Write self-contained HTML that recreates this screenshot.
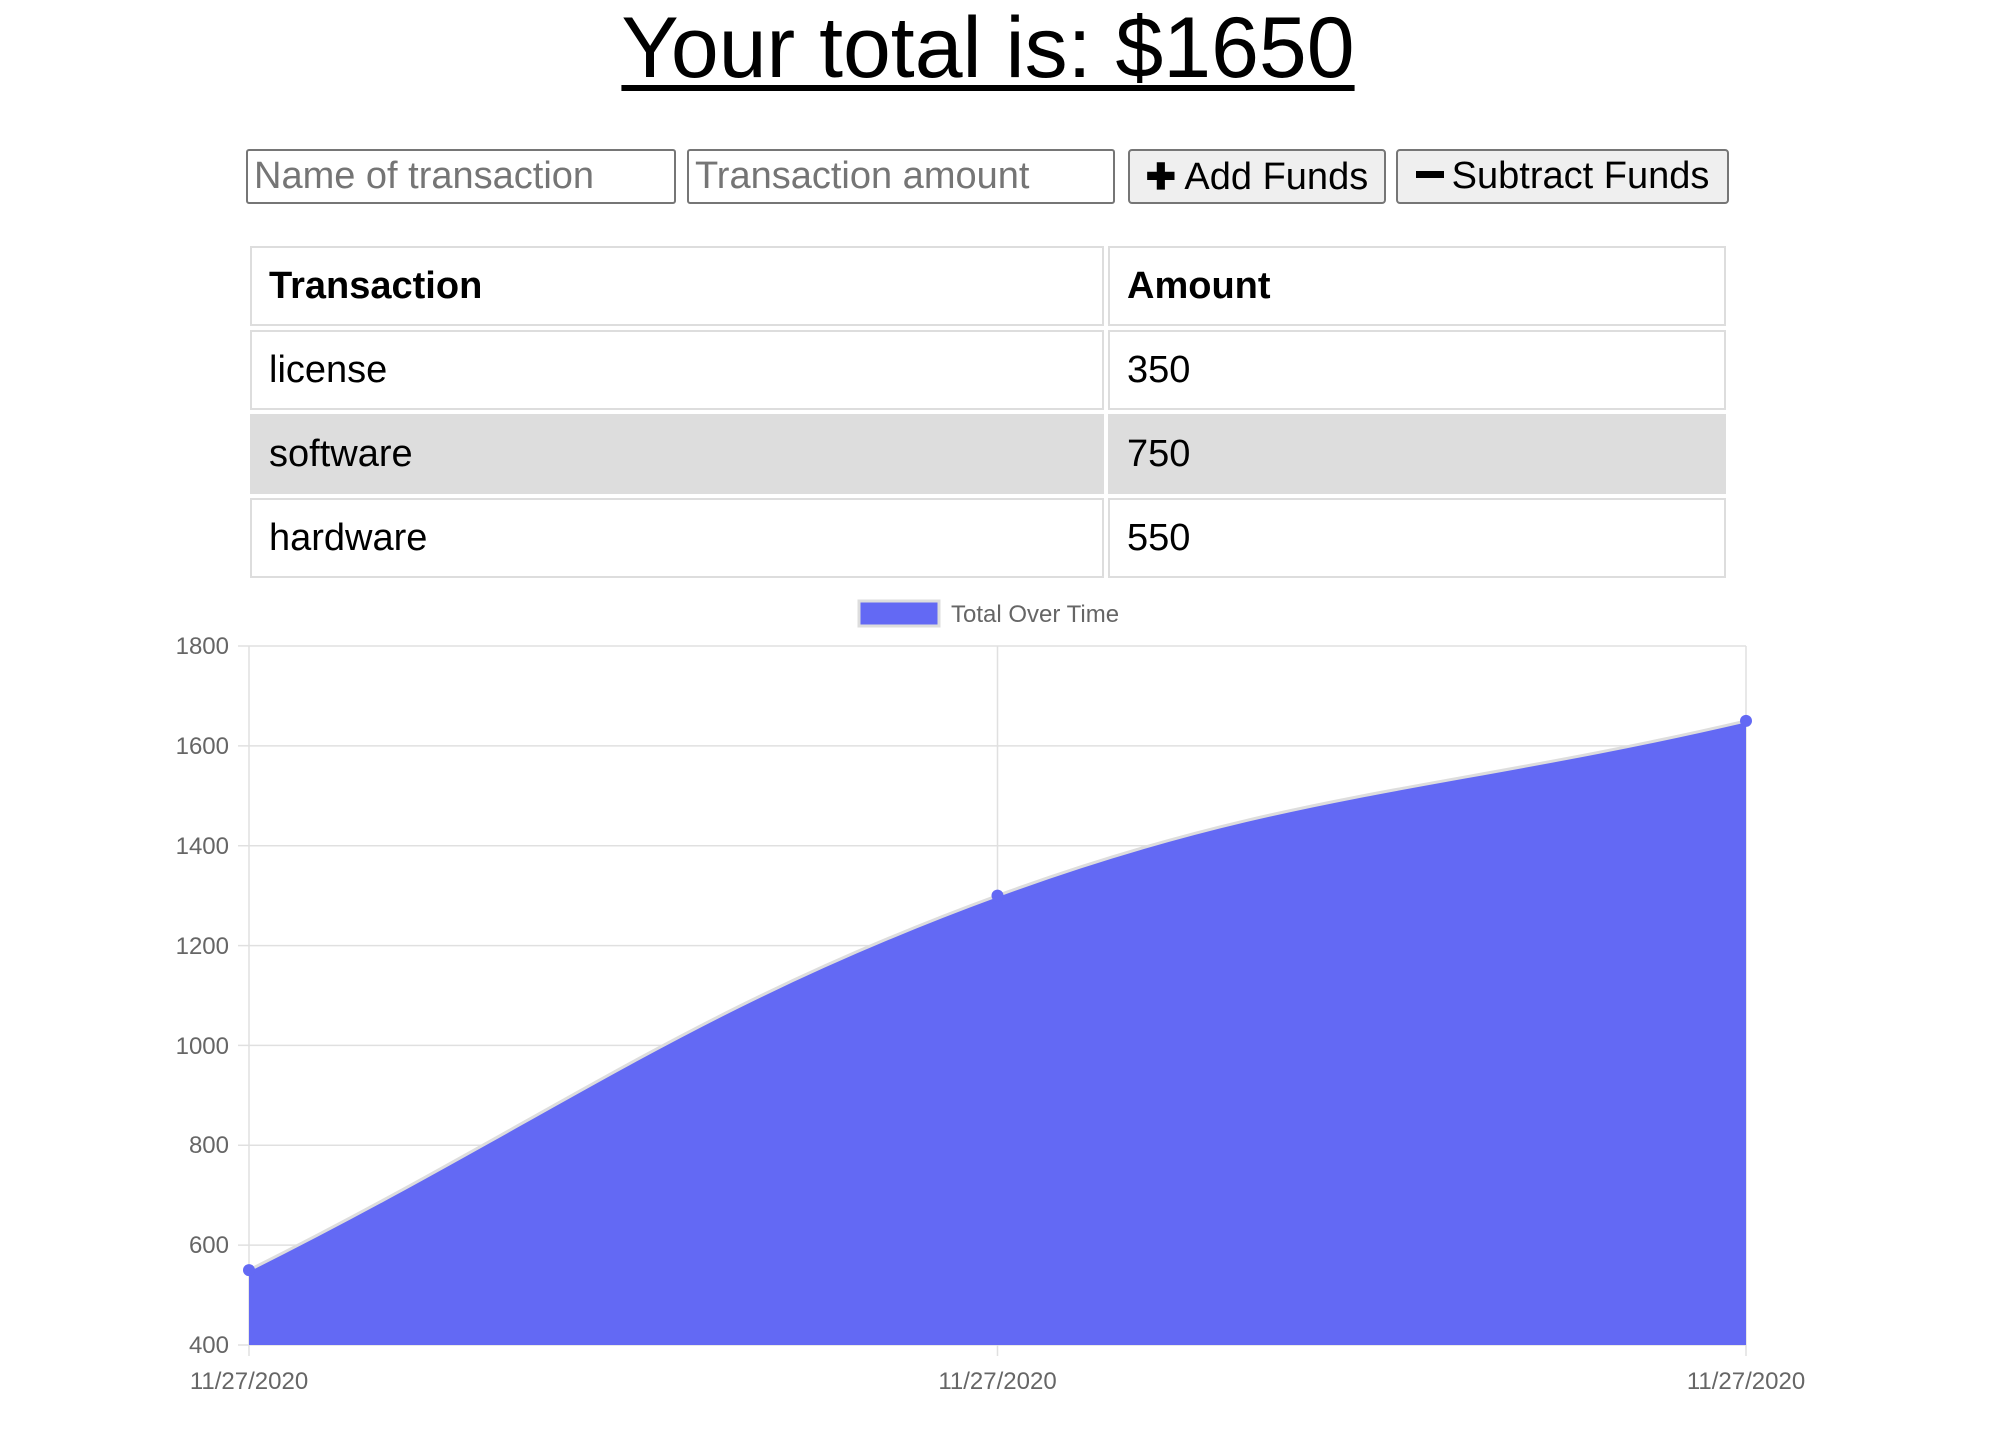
<!DOCTYPE html>
<html><head><meta charset="utf-8"><style>
body{margin:0;width:2010px;height:1452px;background:#fff;font-family:"Liberation Sans",sans-serif;position:relative;overflow:hidden}
h1{position:absolute;left:0;width:1976px;top:0px;margin:0;font-size:86px;line-height:96px;font-weight:normal;text-align:center;text-decoration:underline;text-decoration-thickness:6px;text-underline-offset:8px}
.in{position:absolute;top:149px;height:55px;box-sizing:border-box;border:2px solid #767676;border-radius:3px;font-size:38px;color:#757575;padding:0 6px;line-height:51px;white-space:nowrap;overflow:hidden}
.btn{position:absolute;top:149px;height:55px;box-sizing:border-box;border:2px solid #767676;border-radius:4px;background:#efefef;font-size:38px;color:#000;line-height:51px;text-align:center;white-space:nowrap}
table{position:absolute;left:246px;top:242px;border-spacing:4px;border-collapse:separate}
td{border:2px solid #ddd;font-size:38px;height:80px;box-sizing:border-box;padding:0 0 0 17px}
td.a{width:854px}td.b{width:618px}
tr.g td{background:#ddd}
</style></head><body>
<h1>Your total is: $1650</h1>
<div class="in" style="left:246px;width:430px">Name of transaction</div>
<div class="in" style="left:687px;width:428px">Transaction amount</div>
<div class="btn" style="left:1128px;width:258px"><b style="font-size:36px">✚</b> Add Funds</div>
<div class="btn" style="left:1396px;width:333px"><span style="display:inline-block;width:28px;height:7px;background:#000;vertical-align:middle;margin-right:8px;position:relative;top:-3px"></span>Subtract Funds</div>
<table>
<tr><td class="a"><b>Transaction</b></td><td class="b"><b>Amount</b></td></tr>
<tr><td class="a">license</td><td class="b">350</td></tr>
<tr class="g"><td class="a">software</td><td class="b">750</td></tr>
<tr><td class="a">hardware</td><td class="b">550</td></tr>
</table>
<svg width="2010" height="1452" style="position:absolute;left:0;top:0" font-family="Liberation Sans, sans-serif">
<rect x="859" y="601" width="80" height="25" fill="#6369f4" stroke="#ddd" stroke-width="3"/>
<text x="951" y="622" font-size="24" fill="#666">Total Over Time</text>
<g stroke="#e0e0e0" stroke-width="1.5">
<line x1="238" x2="1746" y1="646" y2="646"/><line x1="238" x2="1746" y1="745.9" y2="745.9"/><line x1="238" x2="1746" y1="845.7" y2="845.7"/><line x1="238" x2="1746" y1="945.6" y2="945.6"/><line x1="238" x2="1746" y1="1045.4" y2="1045.4"/><line x1="238" x2="1746" y1="1145.3" y2="1145.3"/><line x1="238" x2="1746" y1="1245.1" y2="1245.1"/><line x1="238" x2="1746" y1="1345" y2="1345"/>
<line x1="249" x2="249" y1="646" y2="1356"/><line x1="997.5" x2="997.5" y1="646" y2="1356"/><line x1="1746" x2="1746" y1="646" y2="1356"/>
</g>
<path d="M249,1270.1 C548.4,1120.3 685.3,1010.1 997.5,895.6 C1284.1,790.4 1446.6,790.8 1746,720.9 L1746,1345 L249,1345 Z" fill="#6369f4"/>
<path d="M249,1270.1 C548.4,1120.3 685.3,1010.1 997.5,895.6 C1284.1,790.4 1446.6,790.8 1746,720.9" fill="none" stroke="#ddd" stroke-width="3"/>
<g fill="#6369f4"><circle cx="249" cy="1270.1" r="6"/><circle cx="997.5" cy="895.6" r="6"/><circle cx="1746" cy="720.9" r="6"/></g>
<g font-size="24" fill="#666" text-anchor="end">
<text x="229" y="654">1800</text><text x="229" y="754">1600</text><text x="229" y="854">1400</text><text x="229" y="954">1200</text><text x="229" y="1054">1000</text><text x="229" y="1153">800</text><text x="229" y="1253">600</text><text x="229" y="1353">400</text>
</g>
<g font-size="24" fill="#666" text-anchor="middle">
<text x="249" y="1389">11/27/2020</text><text x="997.5" y="1389">11/27/2020</text><text x="1746" y="1389">11/27/2020</text>
</g>
</svg>
</body></html>
